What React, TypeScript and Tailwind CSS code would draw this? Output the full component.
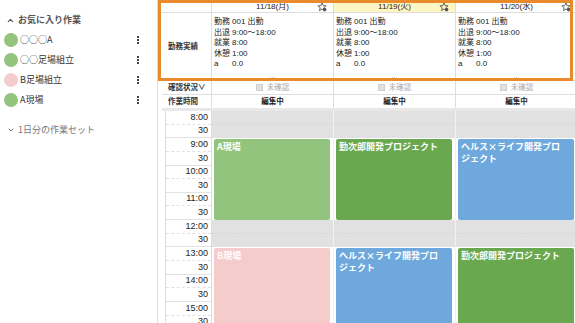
import React from 'react';
import { ChevronUp, ChevronDown } from 'lucide-react';

type Block = { kind: 'off' | 'event'; rows: number; label?: string; color?: string };

const favorites = [
  { name: '○○○A', color: 'bg-[#93c47d]' },
  { name: '○○足場組立', color: 'bg-[#93c47d]' },
  { name: 'B足場組立', color: 'bg-[#f4cccc]' },
  { name: 'A現場', color: 'bg-[#93c47d]' },
];

const days = [
  { date: '11/18(月)', today: false },
  { date: '11/19(火)', today: true },
  { date: '11/20(水)', today: false },
];

const schedule: Block[][] = [
  [
    { kind: 'off', rows: 2 },
    { kind: 'event', rows: 6, label: 'A現場', color: 'bg-[#93c47d]' },
    { kind: 'off', rows: 2 },
    { kind: 'event', rows: 10, label: 'B現場', color: 'bg-[#f4cccc]' },
  ],
  [
    { kind: 'off', rows: 2 },
    { kind: 'event', rows: 6, label: '勤次郎開発プロジェクト', color: 'bg-[#6aa84f]' },
    { kind: 'off', rows: 2 },
    { kind: 'event', rows: 10, label: 'ヘルス×ライフ開発プロジェクト', color: 'bg-[#6fa8dc]' },
  ],
  [
    { kind: 'off', rows: 2 },
    { kind: 'event', rows: 6, label: 'ヘルス×ライフ開発プロジェクト', color: 'bg-[#6fa8dc]' },
    { kind: 'off', rows: 2 },
    { kind: 'event', rows: 10, label: '勤次郎開発プロジェクト', color: 'bg-[#6aa84f]' },
  ],
];

const ROW = 13.65;

const times: string[] = [];
for (let h = 8; h < 18; h++) {
  times.push(`${h}:00`);
  times.push('30');
}

function StarIcon() {
  return (
    <svg width="10" height="10" viewBox="0 0 10 10" className="absolute right-[6px] top-[2px]">
      <path
        d="M5 0.8 L6.1 3.6 L9.1 3.8 L6.8 5.7 L7.5 8.6 L5 7 L2.5 8.6 L3.2 5.7 L0.9 3.8 L3.9 3.6 Z"
        fill="none"
        stroke="#555"
        strokeWidth="0.9"
        strokeLinejoin="round"
      />
      <circle cx="7.6" cy="7.6" r="1.8" fill="#555" />
    </svg>
  );
}

function Kebab() {
  return (
    <div className="flex flex-col gap-[1px]">
      <span className="w-[2px] h-[2px] bg-[#444]" />
      <span className="w-[2px] h-[2px] bg-[#444]" />
      <span className="w-[2px] h-[2px] bg-[#444]" />
    </div>
  );
}

export default function App() {
  return (
    <div className="w-[575px] h-[323px] overflow-hidden flex bg-white text-[#222] font-['Liberation_Sans','Noto_Sans_CJK_JP',sans-serif]">
      {/* Sidebar */}
      <aside className="w-[158px] shrink-0 border-r border-[#dcdcdc] font-['Noto_Sans_CJK_JP',sans-serif]">
        <div className="mt-[13px] h-[14px] flex items-center pl-[6px] gap-[3px] text-[#555]">
          <ChevronUp size={9} strokeWidth={3} />
          <span className="text-[9px] font-bold">お気に入り作業</span>
        </div>
        <ul className="mt-[3px]">
          {favorites.map((f) => (
            <li key={f.name} className="h-[20px] flex items-center justify-between pl-[4px] pr-[18px]">
              <div className="flex items-center gap-[2px]">
                <span className={`w-[14px] h-[14px] rounded-full ${f.color}`} />
                <span className="text-[9px] text-[#333]">{f.name}</span>
              </div>
              <Kebab />
            </li>
          ))}
        </ul>
        <div className="mt-[13px] h-[14px] flex items-center pl-[7px] gap-[3px] text-[#777]">
          <ChevronDown size={8} strokeWidth={3} />
          <span className="text-[9px]">1日分の作業セット</span>
        </div>
      </aside>

      {/* Main */}
      <main className="flex-1 relative overflow-hidden pl-[4px]">
        <div className="grid grid-cols-[50px_122px_122px_122px] w-[416px]">
          {/* date row */}
          <div className="h-[13px] border-b border-r border-[#ddd]" />
          {days.map((d) => (
            <div
              key={d.date}
              className={`relative h-[13px] border-b border-r border-[#ddd] flex items-center justify-center text-[8px] pt-[1px] ${d.today ? 'bg-[#fdf6c3]' : ''}`}
            >
              {d.date}
              <StarIcon />
            </div>
          ))}

          {/* record row */}
          <div className="h-[68px] border-r border-b border-[#ddd] flex items-center pl-[6px] text-[7.5px] font-semibold text-[#333]">
            勤務実績
          </div>
          {days.map((d) => (
            <div key={d.date} className="relative h-[68px] border-r border-b border-[#ddd] pt-[4px] pl-[2px] text-[8px] leading-[10.5px]">
              <div className="flex"><span className="w-[18px]">勤務</span><span>001 出勤</span></div>
              <div className="flex"><span className="w-[18px]">出退</span><span>9:00～18:00</span></div>
              <div className="flex"><span className="w-[18px]">就業</span><span>8:00</span></div>
              <div className="flex"><span className="w-[18px]">休憩</span><span>1:00</span></div>
              <div className="flex"><span className="w-[18px]">a</span><span>0.0</span></div>
              <div className="absolute bottom-[2px] left-0 right-0 flex justify-center gap-[1px]">
                <span className="w-[1px] h-[1px] bg-[#ccc]" />
                <span className="w-[1px] h-[1px] bg-[#ccc]" />
                <span className="w-[1px] h-[1px] bg-[#ccc]" />
              </div>
            </div>
          ))}

          {/* confirm row */}
          <div className="h-[14px] border-r border-b border-[#ddd] flex items-center pl-[6px] text-[7.5px] font-semibold text-[#333]">
            確認状況∨
          </div>
          {days.map((d) => (
            <div key={d.date} className="h-[14px] border-r border-b border-[#ddd] flex items-center justify-center gap-[4px]">
              <span className="w-[7px] h-[7px] bg-[#e0e0e0] border border-[#cfcfcf]" />
              <span className="text-[7.5px] text-[#aaa]">未確認</span>
            </div>
          ))}

          {/* work time row */}
          <div className="h-[13px] border-r border-[#ddd] flex items-center pl-[6px] text-[7.5px] font-semibold text-[#333]">
            作業時間
          </div>
          {days.map((d) => (
            <div key={d.date} className="h-[13px] border-r border-[#ddd] flex items-center justify-center text-[7.5px] font-bold">
              編集中
            </div>
          ))}
        </div>

        <div className="h-[3px] w-[416px] bg-[#e8e8e8]" />

        {/* time grid */}
        <div className="grid grid-cols-[50px_122px_122px_122px] w-[416px]">
          <div className="flex flex-col border-l border-r border-[#ddd] ml-[3px]">
            {times.map((t, i) => (
              <div
                key={i}
                className={`h-[13.65px] shrink-0 flex items-center justify-end pr-[3px] text-[9px] ${i % 2 === 0 ? 'border-b border-dashed border-[#e2e2e2]' : 'border-b border-[#e2e2e2]'}`}
              >
                {t}
              </div>
            ))}
          </div>
          {schedule.map((col, ci) => (
            <div key={ci} className="flex flex-col border-r border-[#f2f2f2]">
              {col.map((b, bi) =>
                b.kind === 'off' ? (
                  <div key={bi} className="shrink-0 bg-[#e1e1e1] flex flex-col" style={{ height: b.rows * ROW }}>
                    <div className="flex-1 border-b border-dashed border-[#d8d8d8]" />
                    <div className="flex-1" />
                  </div>
                ) : (
                  <div key={bi} className="shrink-0 pl-[2px] pr-[3px] pt-[1px]" style={{ height: b.rows * ROW }}>
                    <div className={`h-full rounded-[2px] ${b.color} pl-[3px] pr-[6px] pt-[2px] text-[9px] font-bold leading-[12px] text-white [line-break:loose] font-['Noto_Sans_CJK_JP',sans-serif]`}>
                      {b.label}
                    </div>
                  </div>
                )
              )}
            </div>
          ))}
        </div>

        {/* highlight frame over the work record */}
        <div className="absolute left-0 top-0 w-[415px] h-[81px] border-[3px] border-[#e98a2c] pointer-events-none" />
      </main>
    </div>
  );
}
